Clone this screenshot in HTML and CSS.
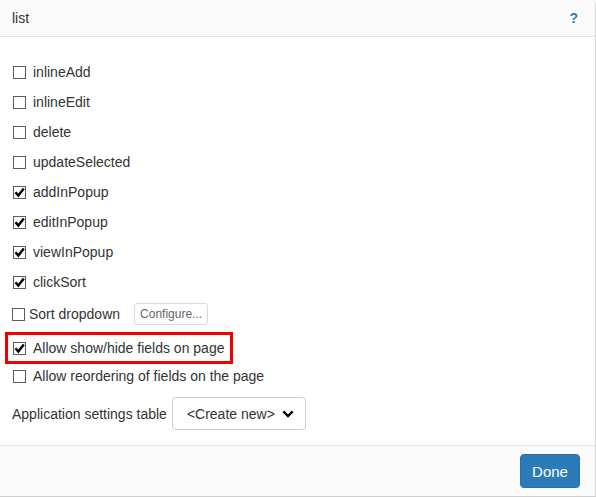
FILE: index.html
```html
<!DOCTYPE html>
<html>
<head>
<meta charset="utf-8">
<link rel="stylesheet" href="styles.css">
</head>
<body>
<div class="dialog">
  <div class="header">
    <span class="title">list</span>
    <span class="help">?</span>
  </div>
  <div class="content">
    <div class="row"><span class="cb"></span><span>inlineAdd</span></div>
    <div class="row"><span class="cb"></span><span>inlineEdit</span></div>
    <div class="row"><span class="cb"></span><span>delete</span></div>
    <div class="row"><span class="cb"></span><span>updateSelected</span></div>
    <div class="row"><span class="cb checked"><svg viewBox="0 0 13 13" width="13" height="13"><path d="M2.5 6.3 L5.3 9.6 L10.8 2.6" fill="none" stroke="#000" stroke-width="2.5"/></svg></span><span>addInPopup</span></div>
    <div class="row"><span class="cb checked"><svg viewBox="0 0 13 13" width="13" height="13"><path d="M2.5 6.3 L5.3 9.6 L10.8 2.6" fill="none" stroke="#000" stroke-width="2.5"/></svg></span><span>editInPopup</span></div>
    <div class="row"><span class="cb checked"><svg viewBox="0 0 13 13" width="13" height="13"><path d="M2.5 6.3 L5.3 9.6 L10.8 2.6" fill="none" stroke="#000" stroke-width="2.5"/></svg></span><span>viewInPopup</span></div>
    <div class="row"><span class="cb checked"><svg viewBox="0 0 13 13" width="13" height="13"><path d="M2.5 6.3 L5.3 9.6 L10.8 2.6" fill="none" stroke="#000" stroke-width="2.5"/></svg></span><span>clickSort</span></div>
    <div class="row sort-row"><span class="cb"></span><span>Sort dropdown</span><button class="configure">Configure...</button></div>
    <div class="row highlight"><span class="cb checked"><svg viewBox="0 0 13 13" width="13" height="13"><path d="M2.5 6.3 L5.3 9.6 L10.8 2.6" fill="none" stroke="#000" stroke-width="2.5"/></svg></span><span>Allow show/hide fields on page</span></div>
    <div class="row reorder-row"><span class="cb"></span><span>Allow reordering of fields on the page</span></div>
    <div class="settings-row">
      <span>Application settings table</span>
      <div class="select"><span>&lt;Create new&gt;</span><svg class="chev" viewBox="0 0 12 8" width="12" height="8"><path d="M1.3 1.3 L6 6 L10.7 1.3" fill="none" stroke="#000" stroke-width="2.4"/></svg></div>
    </div>
  </div>
  <div class="footer">
    <button class="done">Done</button>
  </div>
</div>
</body>
</html>
```
FILE: styles.css
```css
* { box-sizing: border-box; }
html, body { margin: 0; padding: 0; background: #fff; }
body {
  font-family: "Liberation Sans", Arial, sans-serif;
  font-size: 14px;
  color: #333;
}
.dialog {
  width: 596px;
  height: 497px;
  display: flex;
  flex-direction: column;
  border-right: 1px solid #d4d4d4;
  border-bottom: 1px solid #cfcfcf;
  border-top-right-radius: 5px;
  overflow: hidden;
}
.header {
  height: 37px;
  flex: none;
  display: flex;
  align-items: center;
  justify-content: space-between;
  padding: 0 17px 0 12px;
  background: #fafafa;
  border-bottom: 1px solid #e3e3e3;
}
.title { color: #333; }
.help { color: #2a7ab8; font-weight: bold; font-size: 14px; }
.content {
  flex: 1;
  padding: 20px 12px 0 13px;
}
.row {
  height: 30px;
  display: flex;
  align-items: center;
  gap: 7px;
}
.cb {
  width: 13px;
  height: 13px;
  border: 1px solid #5c5c5c;
  background: #fff;
  flex: none;
  position: relative;
}
.cb svg {
  position: absolute;
  left: -1px;
  top: -1px;
}
.sort-row {
  height: 34px;
  gap: 4px;
  margin-left: -1px;
}
.configure {
  margin-left: 10px;
  height: 22px;
  padding: 0 5px;
  font-family: "Liberation Sans", Arial, sans-serif;
  font-size: 12px;
  color: #666;
  background: #fff;
  border: 1px solid #d9d9d9;
  border-radius: 3px;
}
.highlight {
  margin-top: 1px;
  margin-left: -8px;
  height: 32px;
  width: 228px;
  border: 3px solid #f00000;
  padding-left: 5px;
}
.reorder-row { height: 24px; }
.settings-row {
  margin-top: 9px;
  margin-left: -1px;
  display: flex;
  align-items: center;
  gap: 5px;
}
.select {
  width: 134px;
  height: 33px;
  border: 1px solid #ccc;
  border-radius: 4px;
  display: flex;
  align-items: center;
  padding-left: 14px;
  gap: 7px;
  background: #fff;
}
.chev { flex: none; }
.footer {
  flex: none;
  height: 51px;
  border-top: 1px solid #e3e3e3;
  background: #fafafa;
  display: flex;
  align-items: flex-start;
  justify-content: flex-end;
  padding: 8px 15px 0 0;
}
.done {
  height: 34px;
  width: 60px;
  background: #2b7bb9;
  border: 1px solid #2a6ea6;
  border-radius: 4px;
  color: #fff;
  font-family: "Liberation Sans", Arial, sans-serif;
  font-size: 15px;
}
```
